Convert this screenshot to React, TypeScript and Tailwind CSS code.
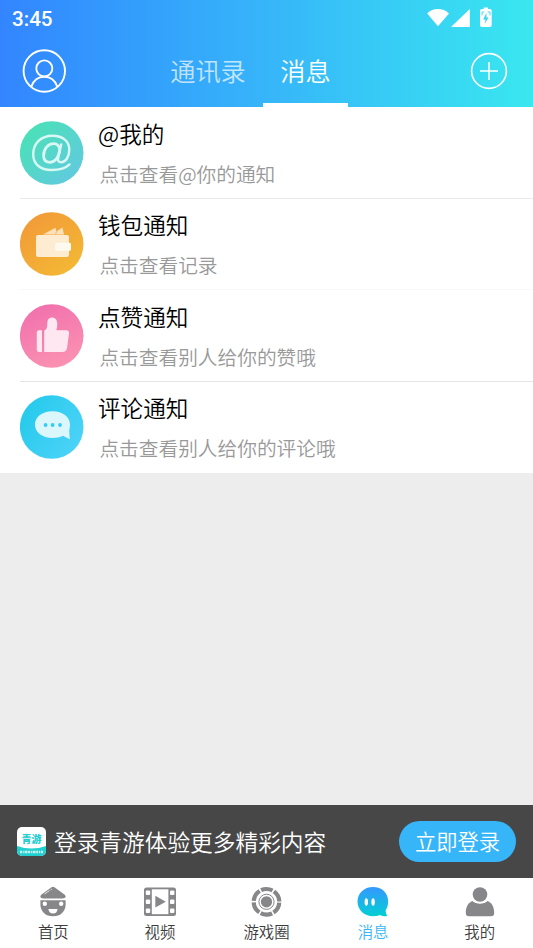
import React from "react";

const CJK = "font-['Noto_Sans_CJK_SC',sans-serif]";
const DEMI = "font-['Noto_Sans_CJK_SC_DemiLight','Noto_Sans_CJK_SC',sans-serif] font-[350]";

function AtIcon() {
  return (
    <svg viewBox="0 0 64 64" className="h-16 w-16 shrink-0">
      <defs>
        <linearGradient id="at" x1="0.15" y1="0.15" x2="0.85" y2="0.85">
          <stop offset="0" stopColor="#4be0b9" />
          <stop offset="1" stopColor="#60cbdc" />
        </linearGradient>
      </defs>
      <circle cx="31.7" cy="32" r="31.8" fill="url(#at)" />
      <g fill="none" stroke="#d9f8f3" strokeLinecap="round" strokeLinejoin="round">
        <path d="M49.5 43.4C45.5 47.5 39.5 49 31.5 49C20 49 13.2 43 13.2 33.2C13.2 22.5 21 14.8 32.5 14.8C43 14.8 49.3 20.5 49.3 28.5C49.3 36 45.4 41.3 41.2 41.3C38.4 41.3 37.6 39.5 38.2 36.8L41.2 23.5" strokeWidth="2.4" />
        <path d="M39.8 29C39.3 24.6 37 22.6 33.6 22.6C28 22.6 23.6 28 23.6 34.6C23.6 38.9 26 41.3 29.7 41.3C34.8 41.3 38.4 36.5 39.8 29Z" strokeWidth="2.8" />
      </g>
    </svg>
  );
}

function WalletIcon() {
  return (
    <svg viewBox="0 0 64 64" className="h-16 w-16 shrink-0">
      <defs>
        <linearGradient id="wa" x1="0.2" y1="0.1" x2="0.8" y2="0.9">
          <stop offset="0" stopColor="#f29c38" />
          <stop offset="1" stopColor="#f3b735" />
        </linearGradient>
      </defs>
      <circle cx="31.7" cy="32" r="31.8" fill="url(#wa)" />
      <path d="M23 22.4L35.4 15.8L36.5 19.5L42.5 15.6L44 22.4Z" fill="#fbe0b9" />
      <path d="M35.4 22L37 19.2" stroke="#f2a03a" strokeWidth=".6" />
      <rect x="16" y="23" width="33" height="22" rx="2.2" fill="#fdecd1" />
      <rect x="35" y="30.8" width="16" height="8" rx="1.5" fill="#fffaf0" />
      <circle cx="38.7" cy="34.7" r="1.5" fill="#fff" stroke="#fce9cd" strokeWidth=".5" />
    </svg>
  );
}

function LikeIcon() {
  return (
    <svg viewBox="0 0 64 64" className="h-16 w-16 shrink-0">
      <defs>
        <linearGradient id="li" x1="0.3" y1="0" x2="0.7" y2="1">
          <stop offset="0" stopColor="#f171ad" />
          <stop offset="1" stopColor="#fb92b2" />
        </linearGradient>
      </defs>
      <circle cx="31.7" cy="32" r="31.8" fill="url(#li)" />
      <g fill="#fee7f0">
        <path d="M19.2 26.2H22V48H19.2Q16.8 48 16.8 45.7V28.5Q16.8 26.2 19.2 26.2Z" />
        <path d="M24.2 48V26.4C27 25.6 27.3 23 27.3 19.5C27.3 15.6 29 13.4 32.2 13.4C35.8 13.4 37.3 16.5 37.3 19.8C37.3 22.5 36.8 24.5 36.4 26.2H46Q49.5 26.2 49 29.6L47 44.3Q46.2 48 42.5 48Z" />
      </g>
    </svg>
  );
}

function CommentIcon() {
  return (
    <svg viewBox="0 0 64 64" className="h-16 w-16 shrink-0">
      <defs>
        <linearGradient id="co" x1="0.1" y1="0.3" x2="0.9" y2="0.8">
          <stop offset="0" stopColor="#29cbed" />
          <stop offset="1" stopColor="#4bd2f8" />
        </linearGradient>
      </defs>
      <circle cx="31.7" cy="32" r="31.8" fill="url(#co)" />
      <path d="M32.5 16.3C42.5 16.3 50 22 50 29.7C50 32 49.4 34 49.2 36L49.8 44.3L43 40.8C40 42.4 36.5 43 32.5 43C22.3 43 15 37.4 15 29.7C15 22 22.3 16.3 32.5 16.3Z" fill="#dbf7fc" />
      <g fill="#36ccef">
        <circle cx="25.6" cy="30" r="1.9" />
        <circle cx="32.6" cy="30" r="1.9" />
        <circle cx="40" cy="30" r="1.9" />
      </g>
    </svg>
  );
}

const rows = [
  { icon: <AtIcon />, title: "@我的", sub: "点击查看@你的通知", line: "border-[#e9e9e9]" },
  { icon: <WalletIcon />, title: "钱包通知", sub: "点击查看记录", line: "border-[#f8f8f8]" },
  { icon: <LikeIcon />, title: "点赞通知", sub: "点击查看别人给你的赞哦", line: "border-[#e4e4e4]" },
  { icon: <CommentIcon />, title: "评论通知", sub: "点击查看别人给你的评论哦", line: "border-white" },
];

function Header() {
  return (
    <header className="flex h-[107px] shrink-0 flex-col bg-gradient-to-r from-[#3385ff] via-[#37b5f9] to-[#3ae7ef] text-white">
      <div className="flex h-9 shrink-0 items-center justify-between pl-3 pr-[39px]">
        <span className="pt-0.5 font-[Roboto] text-[20.6px] font-medium leading-6">3:45</span>
        <svg viewBox="0 0 68 22" className="h-[22px] w-[68px]" fill="#fff">
          <path d="M1.2 6.4C7 .6 17 .6 23 6.4L12 19.3Z" />
          <path d="M43.8 2V20H25Z" />
          <path d="M56 2H57.7V.5H62V2H64Q65.7 2 65.7 3.7V18Q65.7 20 63.9 20H55.8Q54 20 54 18V3.7Q54 2 56 2Z" />
          <path d="M60.5 5.8L57.2 12.6H59.5L58.8 16.8L62.6 10.6H60.4Z" fill="#39d4f2" />
          <path d="M56 8.4V5H58.2M64 8.4V5H61.6" fill="none" stroke="#39d4f2" strokeWidth=".9" />
        </svg>
      </div>
      <div className="flex flex-1 items-stretch">
        <div className="flex w-[153px] pl-[22px] pt-[13px]">
          <svg viewBox="0 0 44 44" className="h-11 w-11" fill="none" stroke="#fff" strokeWidth="1.9">
            <circle cx="22.3" cy="22" r="20.7" />
            <circle cx="22.3" cy="19.4" r="8" />
            <path d="M9.3 37.8C11.5 31.5 16 27.8 22.3 27.8S33.1 31.5 35.3 37.8" />
          </svg>
        </div>
        <div className={`flex w-[110px] justify-center pt-[15px] text-[25.2px] leading-[38px] text-white/70 ${DEMI}`}>通讯录</div>
        <div className={`flex w-[85px] justify-center border-b-4 border-white pt-[15px] text-[25.2px] leading-[38px] ${DEMI}`}>消息</div>
        <div className="flex flex-1 justify-end pr-[25px] pt-4">
          <svg viewBox="0 0 38 38" className="h-[38px] w-[38px]" fill="none" stroke="#fff" strokeWidth="1.6">
            <circle cx="19" cy="19" r="17.4" />
            <path d="M19 10V28M10 19H28" />
          </svg>
        </div>
      </div>
    </header>
  );
}

function AppLogo() {
  return (
    <div className="flex h-[29px] w-[29px] flex-col overflow-hidden rounded-[5px] bg-white">
      <div className={`flex h-[19px] items-end justify-center text-[10px] font-black leading-[15px] text-[#25cdd0] ${CJK}`}>青游</div>
      <svg viewBox="0 0 29 10" className="h-[10px] w-[29px]">
        <path d="M0 0Q14.5 5 29 0V10H0Z" fill="#21cfcf" />
        <path d="M3 6H26" stroke="#c3f3f2" strokeWidth="2.4" strokeDasharray="2 .8 1 .7 3 .6" />
      </svg>
    </div>
  );
}

function HomeIcon() {
  return (
    <svg viewBox="0 0 32 32" className="h-8 w-8" fill="#878789">
      <path d="M14.2 1.4Q16 .1 17.8 1.4L27.8 8.8Q29.2 10.5 28.4 11.4Q27.5 12.4 25 12.4H7Q4.5 12.4 3.6 11.4Q2.8 10.5 4.2 8.8Z" />
      <path d="M3.4 14.2H28.6V18.4C28.6 25.5 23.5 30.2 16 30.2S3.4 25.5 3.4 18.4Z" />
      <path d="M7.5 8L12.5 4.6M13.6 3.9L14.8 3.1" stroke="#fff" strokeWidth=".8" />
      <circle cx="7.8" cy="17.7" r="2.2" fill="#fff" />
      <circle cx="24.2" cy="17.7" r="2.2" fill="#fff" />
      <path d="M11.4 23H20.6Q20 27.6 16 27.6T11.4 23Z" fill="#fff" />
    </svg>
  );
}

function VideoIcon() {
  return (
    <svg viewBox="0 0 34 32" className="h-8 w-[34px]">
      <rect x="1" y="1.5" width="32" height="28.5" rx="2.5" fill="#878789" />
      <rect x="8.8" y="3.3" width="16.6" height="24.9" fill="#fff" />
      <g fill="#fff">
        <rect x="2.8" y="4.5" width="4.4" height="4.4" rx="1" />
        <rect x="2.8" y="13.5" width="4.4" height="4.4" rx="1" />
        <rect x="2.8" y="22.5" width="4.4" height="4.4" rx="1" />
        <rect x="27" y="4.5" width="4.4" height="4.4" rx="1" />
        <rect x="27" y="13.5" width="4.4" height="4.4" rx="1" />
        <rect x="27" y="22.5" width="4.4" height="4.4" rx="1" />
      </g>
      <path d="M12.3 9.8L22.8 15.7L12.3 21.6Z" fill="#878789" />
    </svg>
  );
}

function ChipIcon() {
  return (
    <svg viewBox="0 0 32 32" className="h-8 w-8" fill="none" stroke="#878789">
      <circle cx="16.5" cy="15.8" r="12.8" strokeWidth="4.2" strokeDasharray="11.8 1.6" strokeDashoffset="-.8" />
      <circle cx="16.5" cy="15.8" r="7.6" strokeWidth="1" />
      <circle cx="16.5" cy="15.8" r="5.6" fill="#878789" stroke="none" />
    </svg>
  );
}

function MessageIcon() {
  return (
    <svg viewBox="0 0 32 32" className="h-8 w-8">
      <defs>
        <linearGradient id="ms" x1="0" y1="0" x2="0" y2="1">
          <stop offset="0" stopColor="#3598ff" />
          <stop offset="1" stopColor="#03cfd3" />
        </linearGradient>
      </defs>
      <path d="M16 1C25 1 31.2 7.1 31.2 15.4C31.2 19 30 22 28.6 24.5C28.8 27 29.4 28.5 30.2 29.9C27.8 30.5 25.2 30.2 23 29C20.8 29.8 18.6 30.2 16 30.2C7 30.2.5 23.8.5 15.5S7 1 16 1Z" fill="url(#ms)" />
      <ellipse cx="9.3" cy="16" rx="1.7" ry="3.8" fill="#fff" />
      <ellipse cx="16.1" cy="16" rx="1.7" ry="3.8" fill="#fff" />
    </svg>
  );
}

function MeIcon() {
  return (
    <svg viewBox="0 0 32 32" className="h-8 w-8" fill="#878789">
      <circle cx="16" cy="8.5" r="7.3" />
      <path d="M8.5 15C12 18.7 20 18.7 23.5 15C27.8 16.5 30.2 21 30.2 27Q30.2 30.2 27 30.2H5Q1.8 30.2 1.8 27C1.8 21 4.2 16.5 8.5 15Z" />
    </svg>
  );
}

const tabs = [
  { label: "首页", icon: <HomeIcon />, color: "text-[#3c3c3c]" },
  { label: "视频", icon: <VideoIcon />, color: "text-[#3c3c3c]" },
  { label: "游戏圈", icon: <ChipIcon />, color: "text-[#3c3c3c]" },
  { label: "消息", icon: <MessageIcon />, color: "text-[#37b5f9]" },
  { label: "我的", icon: <MeIcon />, color: "text-[#3c3c3c]" },
];

export default function App() {
  return (
    <div className={`flex h-[948px] w-[533px] flex-col overflow-hidden bg-[#ededed] ${DEMI}`}>
      <Header />
      <main className="flex-1">
        <ul className="bg-white pl-5 pt-[0.9px]">
          {rows.map((r) => (
            <li key={r.title} className={`flex h-[91.3px] items-center gap-[14px] border-b ${r.line}`}>
              {r.icon}
              <div className="flex flex-col">
                <span className="text-[22.6px] leading-[34px] text-black">{r.title}</span>
                <span className="mt-2 pl-[1.4px] text-[19.7px] leading-[30px] text-[#999]">{r.sub}</span>
              </div>
            </li>
          ))}
        </ul>
      </main>
      <section className="flex h-[73px] shrink-0 items-center bg-[#474747] pl-[17px] pr-[17px] text-white">
        <AppLogo />
        <span className="ml-2 flex-1 text-[22.7px] leading-[34px]">登录青游体验更多精彩内容</span>
        <button className="flex h-[41px] w-[117px] items-center justify-center rounded-full bg-[#37b5f9] pb-px text-[21.3px]">立即登录</button>
      </section>
      <nav className="grid h-[70px] shrink-0 grid-cols-5 bg-white">
        {tabs.map((t) => (
          <div key={t.label} className="flex flex-col items-center pt-2">
            {t.icon}
            <span className={`mt-0.5 text-[15.4px] leading-[23px] ${t.color}`}>{t.label}</span>
          </div>
        ))}
      </nav>
    </div>
  );
}
